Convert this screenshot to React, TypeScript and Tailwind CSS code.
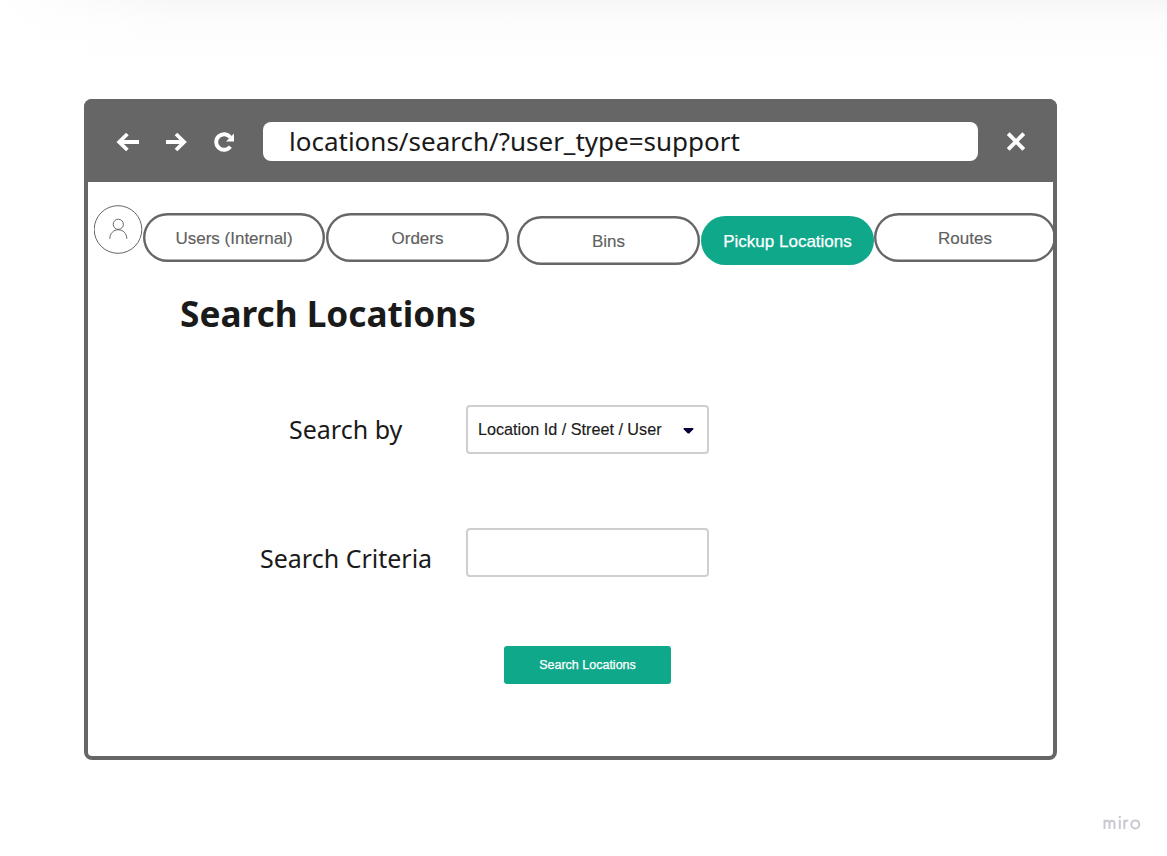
import type { ReactNode } from "react";

function Pill({ className, children }: { className: string; children: ReactNode }) {
  return (
    <button
      className={`flex h-[49px] shrink-0 items-center justify-center rounded-full pt-px text-[17px] leading-none whitespace-nowrap ${className}`}
    >
      {children}
    </button>
  );
}

const outlined = "text-[#606060] shadow-[inset_0_0_0_2.4px_#666666] [-webkit-text-stroke:0.15px_#606060]";

function Toolbar() {
  return (
    <header className="flex h-[83px] items-center bg-[#666666] pt-[2px] pl-[32px]">
      <svg className="h-[22px] w-[24px] shrink-0" viewBox="0 0 24 22" fill="none" stroke="white" strokeWidth="3.8">
        <path d="M11.4 3 3.2 11l8.2 8M3.5 11H23" />
      </svg>
      <svg className="ml-[25px] h-[22px] w-[24px] shrink-0" viewBox="0 0 24 22" fill="none" stroke="white" strokeWidth="3.8">
        <path d="m11 3 8.1 8-8.1 8M1 11h18" />
      </svg>
      <svg className="ml-[24px] h-[22px] w-[24px] shrink-0" viewBox="0 0 24 22" fill="none">
        <path d="M17.3 15.6A7.8 7.8 0 1 1 17.3 6.4" stroke="white" strokeWidth="3.9" />
        <path d="M21 2.6V10.6H13z" fill="white" />
      </svg>
      <div className="ml-[26px] flex h-[39px] w-[715px] items-center rounded-[8px] bg-white pb-[2px] pl-[26px] text-[26px] leading-none text-[#1a1a1a]">
        <span className="whitespace-nowrap font-['Noto_Sans',sans-serif]">locations/search/?user_type=support</span>
      </div>
      <svg className="ml-[27px] h-[22px] w-[22px] shrink-0" viewBox="0 0 22 22" fill="none" stroke="white" strokeWidth="4">
        <path d="m3.2 2.7 15.6 15.6M18.8 2.7 3.2 18.3" />
      </svg>
    </header>
  );
}

function Navigation() {
  return (
    <nav className="flex h-[83px] items-start pl-[6px] pt-[22px]">
      <svg className="h-[50px] w-[49px] shrink-0" viewBox="0 0 49 50" fill="none" stroke="#666666" strokeWidth="1">
        <circle cx="24" cy="25.5" r="23.8" />
        <circle cx="24.3" cy="20.3" r="5.1" />
        <path d="M15.8 34.8c0-5.4 3.7-9 8.5-9s8.5 3.6 8.5 9" />
      </svg>
      <Pill className={`mt-[9px] w-[182px] ${outlined}`}>Users (Internal)</Pill>
      <Pill className={`mt-[9px] ml-[1px] w-[183px] ${outlined}`}>Orders</Pill>
      <Pill className={`mt-[12px] ml-[8px] w-[183px] ${outlined}`}>Bins</Pill>
      <Pill className="mt-[12px] ml-[1px] w-[173px] bg-[#0fa88b] text-white [-webkit-text-stroke:0.25px_white]">
        Pickup Locations
      </Pill>
      <Pill className={`mt-[9px] w-[182px] ${outlined}`}>Routes</Pill>
    </nav>
  );
}

export default function App() {
  return (
    <div className="flex h-[856px] w-[1167px] flex-col overflow-hidden bg-white bg-[linear-gradient(to_right,#ffffff,transparent_16%),linear-gradient(to_bottom,#f7f7f7,#fcfcfc_20px,#ffffff_62px)] font-['Liberation_Sans',Arial,sans-serif]">
      <main className="mt-[99px] ml-[84px] flex h-[661px] w-[973px] shrink-0 flex-col rounded-[8px] bg-white shadow-[inset_0_0_0_4px_#666666]">
        <div className="overflow-hidden rounded-t-[8px]">
          <Toolbar />
        </div>
        <div className="flex flex-col px-[4px]">
          <Navigation />
          <h1 className="mt-[23px] ml-[92px] font-['Noto_Sans',sans-serif] text-[35.2px] leading-[50px] font-bold whitespace-nowrap text-[#1a1a1a]">
            <span>Search Locations</span>
          </h1>
          <form className="mt-[67px] flex flex-col">
            <div className="flex h-[49px] items-center">
              <label className="w-[378px] pl-[201px] font-['Noto_Sans',sans-serif] text-[25px] leading-none whitespace-nowrap text-[#1a1a1a]">
                <span>Search by</span>
              </label>
              <button
                type="button"
                className="flex h-[49px] w-[243px] items-center justify-between rounded-[4px] border-2 border-[#cfcfcf] pr-[13px] pl-[10px] text-[16.2px] leading-none whitespace-nowrap text-[#1a1a1a] [-webkit-text-stroke:0.15px_#1a1a1a]"
              >
                <span>Location Id / Street / User</span>
                <svg className="mt-[2px] h-[8px] w-[11px]" viewBox="0 0 11 8">
                  <path d="M1.4 1h8.2q1.6 0 .7 1.2L6.7 6.1q-1.2 1-2.4 0L.7 2.2Q-.2 1 1.4 1z" fill="#050038" />
                </svg>
              </button>
            </div>
            <div className="mt-[74px] flex h-[49px] items-center">
              <label
                htmlFor="criteria"
                className="w-[378px] pt-[12px] pl-[172px] font-['Noto_Sans',sans-serif] text-[25px] leading-none whitespace-nowrap text-[#1a1a1a]"
              >
                <span>Search Criteria</span>
              </label>
              <input id="criteria" className="h-[49px] w-[243px] rounded-[4px] border-2 border-[#cfcfcf]" />
            </div>
            <button
              type="button"
              className="mt-[69px] ml-[416px] flex h-[38px] w-[167px] items-center justify-center rounded-[3px] bg-[#0fa88b] text-[12.5px] leading-none text-white [-webkit-text-stroke:0.25px_white]"
            >
              <span>Search Locations</span>
            </button>
          </form>
        </div>
      </main>
      <footer className="mt-[52px] flex justify-end pr-[26px]">
        <svg className="h-[22px] w-[38px]" viewBox="0 0 38 22" fill="none" stroke="#c9c9d3" strokeWidth="2">
          <path d="M1.5 17V7.8M1.5 11.5c0-3.6 5-3.6 5 0V17M6.5 11.5c0-3.6 5-3.6 5 0V17M16.8 17V7.8M21.3 17V7.8M21.3 12c0-2.5 1.5-3.7 4-3.4" />
          <circle cx="32.3" cy="12.4" r="4" />
          <circle cx="16.8" cy="4.9" r="1.2" fill="#c9c9d3" stroke="none" />
        </svg>
      </footer>
    </div>
  );
}
